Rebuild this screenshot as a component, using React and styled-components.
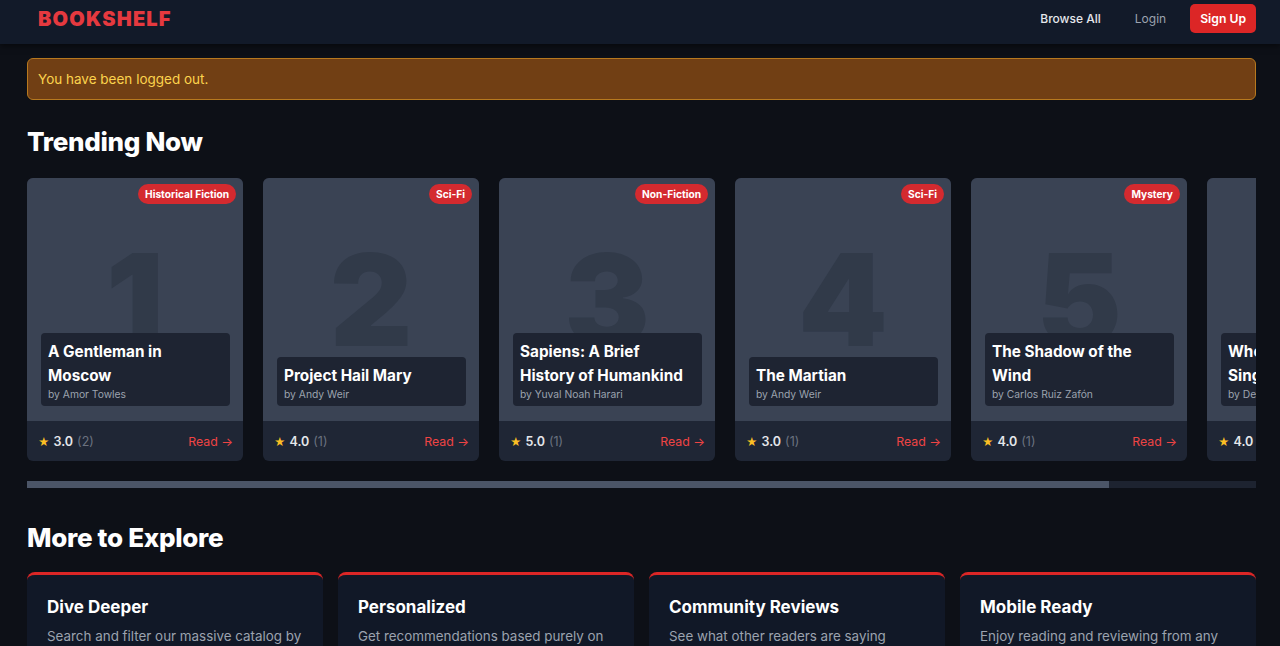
import React from "react";
import styled, { createGlobalStyle } from "styled-components";

const Global = createGlobalStyle`
  html, body { margin: 0; padding: 0; background: #0d1017; }
  body { font-family: Inter, "Noto Sans", sans-serif; color: #f3f4f6; }
  * { box-sizing: border-box; }
`;

const Header = styled.header`
  height: 44px;
  background: #121a29;
  box-shadow: 0 2px 6px rgba(0,0,0,0.5);
  display: flex;
  align-items: flex-start;
  justify-content: space-between;
  padding: 4px 24px 0 38px;
  position: relative;
`;

const Logo = styled.div`
  height: 29px;
  display: flex;
  align-items: center;
  font-size: 20px;
  font-weight: 900;
  color: #e5393f;
  letter-spacing: 1.2px;
`;

const Nav = styled.nav`
  display: flex;
  align-items: center;
  height: 29px;
`;

const NavLink = styled.a`
  font-size: 12px;
  font-weight: ${p => (p.$strong ? 500 : 400)};
  color: ${p => (p.$strong ? "#e5e7eb" : "#9ca3af")};
  margin-right: ${p => p.$mr}px;
  text-decoration: none;
`;

const SignUp = styled.button`
  height: 29px;
  padding: 0 10px;
  background: #dc2626;
  color: #fff;
  border: none;
  border-radius: 5px;
  font-family: inherit;
  font-size: 12.2px;
  font-weight: 600;
`;

const Main = styled.main`
  padding: 14px 24px 0 27px;
`;

const Alert = styled.div`
  height: 42px;
  display: flex;
  align-items: center;
  padding: 0 10px;
  background: #713f14;
  border: 1px solid #b7791f;
  border-radius: 6px;
  color: #fcd34d;
  font-size: 13.5px;
`;

const SectionTitle = styled.h2`
  margin: ${p => p.$mt}px 0 ${p => p.$mb}px;
  font-size: 26px;
  line-height: 31px;
  font-weight: 800;
  color: #fff;
  letter-spacing: -0.3px;
`;

const Scroller = styled.div`
  display: flex;
  gap: 20px;
  overflow-x: hidden;
  padding: 1px 0 20px;
`;

const ScrollTrack = styled.div`
  height: 7px;
  background: #1d2330;
`;

const ScrollThumb = styled.div`
  height: 100%;
  background: #4b5567;
`;

const Card = styled.div`
  flex: 0 0 216px;
  height: 283px;
  border-radius: 6px;
  overflow: hidden;
  display: flex;
  flex-direction: column;
  background: #1f2635;
`;

const Cover = styled.div`
  position: relative;
  height: 243px;
  background: #3a4354;
  display: flex;
  align-items: center;
  justify-content: center;
  overflow: hidden;
`;

const BigNum = styled.div`
  font-size: 128px;
  font-weight: 900;
  line-height: 1;
  color: #313a49;
`;

const Badge = styled.span`
  position: absolute;
  top: 6px;
  right: 7px;
  height: 20px;
  padding: 0 7px;
  display: flex;
  align-items: center;
  border-radius: 10px;
  background: #d42a2f;
  color: #fff;
  font-size: 10.2px;
  font-weight: 700;
`;

const TitleBox = styled.div`
  position: absolute;
  left: 14px;
  right: 13px;
  bottom: 15px;
  background: #1e2432;
  border-radius: 4px;
  padding: 7px 7px 5px;
`;

const BookTitle = styled.div`
  font-size: 15.3px;
  line-height: 23.5px;
  font-weight: 700;
  color: #fff;
`;

const Author = styled.div`
  font-size: 10.3px;
  line-height: 14px;
  color: #9ca3af;
`;

const Footer = styled.div`
  flex: 1;
  display: flex;
  align-items: center;
  justify-content: space-between;
  padding: 1px 10px 0 11px;
  font-size: 12.5px;
`;

const Rating = styled.div`
  display: flex;
  align-items: center;
  gap: 4px;
`;

const Star = styled.span`
  color: #fbbf24;
  font-size: 11px;
`;

const Score = styled.span`
  color: #e5e7eb;
  font-weight: 600;
`;

const Count = styled.span`
  color: #6b7280;
`;

const Read = styled.a`
  color: #ef4444;
  font-size: 12.3px;
  text-decoration: none;
`;

const ExploreGrid = styled.div`
  display: grid;
  grid-template-columns: repeat(4, 1fr);
  gap: 15px;
`;

const ExploreCard = styled.div`
  background: #111827;
  border-top: 3px solid #dc2626;
  border-radius: 8px;
  padding: 20px;
  height: 120px;
`;

const ExploreTitle = styled.h3`
  margin: 0 0 6px;
  font-size: 17px;
  line-height: 24px;
  font-weight: 700;
  color: #fff;
`;

const ExploreText = styled.p`
  margin: 0;
  font-size: 13.4px;
  line-height: 22px;
  color: #9ca3af;
`;

const books = [
  { n: 1, genre: "Historical Fiction", title: "A Gentleman in Moscow", author: "Amor Towles", score: "3.0", count: 2 },
  { n: 2, genre: "Sci-Fi", title: "Project Hail Mary", author: "Andy Weir", score: "4.0", count: 1 },
  { n: 3, genre: "Non-Fiction", title: "Sapiens: A Brief History of Humankind", author: "Yuval Noah Harari", score: "5.0", count: 1 },
  { n: 4, genre: "Sci-Fi", title: "The Martian", author: "Andy Weir", score: "3.0", count: 1 },
  { n: 5, genre: "Mystery", title: "The Shadow of the Wind", author: "Carlos Ruiz Zafón", score: "4.0", count: 1 },
  { n: 6, genre: "Fiction", title: "Where the Crawdads Sing", author: "Delia Owens", score: "4.0", count: 1 },
];

const explore = [
  { title: "Dive Deeper", text: "Search and filter our massive catalog by genre, author and rating." },
  { title: "Personalized", text: "Get recommendations based purely on what you love to read." },
  { title: "Community Reviews", text: "See what other readers are saying about every book." },
  { title: "Mobile Ready", text: "Enjoy reading and reviewing from any device, anywhere." },
];

const visible = 1229;
const total = books.length * 216 + (books.length - 1) * 20;

export default function App() {
  return (
    <>
      <Global />
      <Header>
        <Logo>BOOKSHELF</Logo>
        <Nav>
          <NavLink $strong $mr={34}>Browse All</NavLink>
          <NavLink $mr={24}>Login</NavLink>
          <SignUp>Sign Up</SignUp>
        </Nav>
      </Header>
      <Main>
        <Alert>You have been logged out.</Alert>
        <SectionTitle $mt={26} $mb={20}>Trending Now</SectionTitle>
        <Scroller>
          {books.map(b => (
            <Card key={b.n}>
              <Cover>
                <BigNum>{b.n}</BigNum>
                <Badge>{b.genre}</Badge>
                <TitleBox>
                  <BookTitle>{b.title}</BookTitle>
                  <Author>by {b.author}</Author>
                </TitleBox>
              </Cover>
              <Footer>
                <Rating>
                  <Star>★</Star>
                  <Score>{b.score}</Score>
                  <Count>({b.count})</Count>
                </Rating>
                <Read>Read →</Read>
              </Footer>
            </Card>
          ))}
        </Scroller>
        <ScrollTrack>
          <ScrollThumb style={{ width: `${(visible / total) * 100}%` }} />
        </ScrollTrack>
        <SectionTitle $mt={34} $mb={19}>More to Explore</SectionTitle>
        <ExploreGrid>
          {explore.map(e => (
            <ExploreCard key={e.title}>
              <ExploreTitle>{e.title}</ExploreTitle>
              <ExploreText>{e.text}</ExploreText>
            </ExploreCard>
          ))}
        </ExploreGrid>
      </Main>
    </>
  );
}
